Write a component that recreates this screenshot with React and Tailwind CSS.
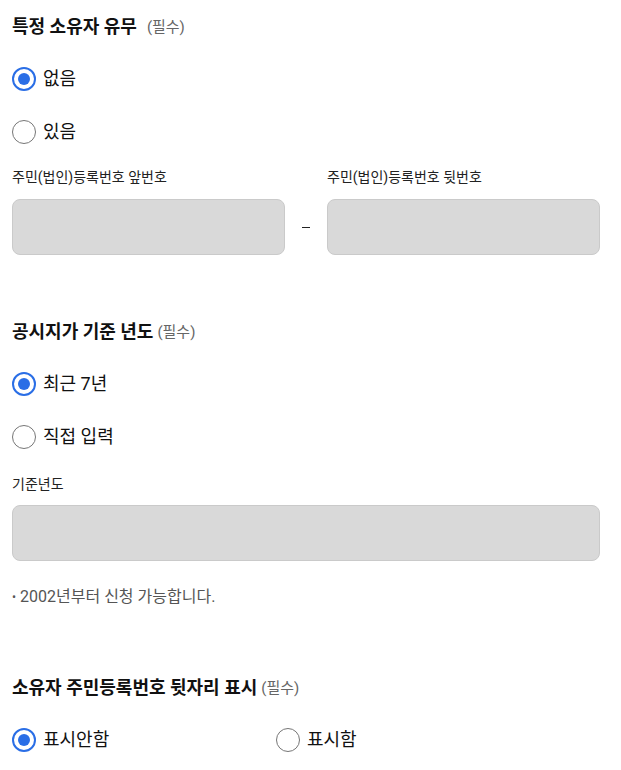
import React, { useState } from "react";

const Radio = ({ checked, label, onClick, className = "" }) => (
  <button
    type="button"
    onClick={onClick}
    className={`flex items-center h-[53px] gap-[7px] text-left ${className}`}
  >
    {checked ? (
      <span className="w-6 h-6 rounded-full border-2 border-[#2a6ee6] flex items-center justify-center shrink-0">
        <span className="w-3 h-3 rounded-full bg-[#2a6ee6]"></span>
      </span>
    ) : (
      <span className="w-6 h-6 rounded-full border border-[#767676] shrink-0"></span>
    )}
    <span className="text-[18px] text-[#111] leading-6">{label}</span>
  </button>
);

const Title = ({ children, gap = "ml-1" }) => (
  <h2 className="h-6 flex items-center text-[18px] font-bold text-[#111] leading-6">
    {children}
    <span className={`${gap} text-[15px] font-normal text-[#666]`}>(필수)</span>
  </h2>
);

const Field = () => (
  <div className="h-[56px] w-full rounded-lg bg-[#d9d9d9] border border-[#cacaca]"></div>
);

const App = () => {
  const [owner, setOwner] = useState("none");
  const [year, setYear] = useState("recent");
  const [show, setShow] = useState("hide");

  return (
    <div className="w-[621px] min-h-[770px] bg-white px-3 pt-[15px] font-['Roboto','Noto_Sans_CJK_KR',sans-serif]">
      <div className="w-[588px]">
        <Title gap="ml-[10px]">특정 소유자 유무</Title>
        <div className="mt-[13px] flex flex-col">
          <Radio checked={owner === "none"} label="없음" onClick={() => setOwner("none")} />
          <Radio checked={owner === "some"} label="있음" onClick={() => setOwner("some")} />
        </div>
        <div className="mt-[9px] flex items-end gap-[17px]">
          <div className="flex-1">
            <p className="text-[14px] leading-5 text-[#222]">주민(법인)등록번호 앞번호</p>
            <div className="mt-3">
              <Field />
            </div>
          </div>
          <div className="h-[56px] flex items-center">
            <span className="block w-2 h-px bg-[#222]"></span>
          </div>
          <div className="flex-1">
            <p className="text-[14px] leading-5 text-[#222]">주민(법인)등록번호 뒷번호</p>
            <div className="mt-3">
              <Field />
            </div>
          </div>
        </div>

        <div className="mt-[65px]">
          <Title>공시지가 기준 년도</Title>
        </div>
        <div className="mt-[13px] flex flex-col">
          <Radio checked={year === "recent"} label="최근 7년" onClick={() => setYear("recent")} />
          <Radio checked={year === "direct"} label="직접 입력" onClick={() => setYear("direct")} />
        </div>
        <p className="mt-[11px] text-[14px] leading-5 text-[#222]">기준년도</p>
        <div className="mt-[11px]">
          <Field />
        </div>
        <p className="mt-[26px] text-[16px] leading-5 text-[#555]">
          <span className="text-[12px] align-[1px]">•</span> 2002년부터 신청 가능합니다.
        </p>

        <div className="mt-[69px]">
          <Title>소유자 주민등록번호 뒷자리 표시</Title>
        </div>
        <div className="mt-[13px] flex">
          <Radio
            checked={show === "hide"}
            label="표시안함"
            onClick={() => setShow("hide")}
            className="w-[264px]"
          />
          <Radio checked={show === "show"} label="표시함" onClick={() => setShow("show")} />
        </div>
      </div>
    </div>
  );
};

export default App;
